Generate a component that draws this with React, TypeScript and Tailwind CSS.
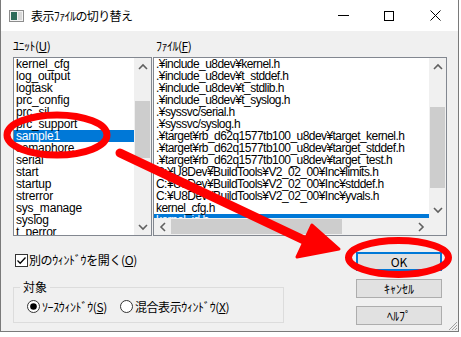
import React from "react";

const units = [
  "kernel_cfg",
  "log_output",
  "logtask",
  "prc_config",
  "prc_sil",
  "prc_support",
  "sample1",
  "semaphore",
  "serial",
  "start",
  "startup",
  "strerror",
  "sys_manage",
  "syslog",
  "t_perror",
];

const files = [
  ".¥include_u8dev¥kernel.h",
  ".¥include_u8dev¥t_stddef.h",
  ".¥include_u8dev¥t_stdlib.h",
  ".¥include_u8dev¥t_syslog.h",
  ".¥syssvc/serial.h",
  ".¥syssvc/syslog.h",
  ".¥target¥rb_d62q1577tb100_u8dev¥target_kernel.h",
  ".¥target¥rb_d62q1577tb100_u8dev¥target_stddef.h",
  ".¥target¥rb_d62q1577tb100_u8dev¥target_test.h",
  "C:¥U8Dev¥BuildTools¥V2_02_00¥Inc¥limits.h",
  "C:¥U8Dev¥BuildTools¥V2_02_00¥Inc¥stddef.h",
  "C:¥U8Dev¥BuildTools¥V2_02_00¥Inc¥yvals.h",
  "kernel_cfg.h",
  "kernel_id.h",
];

const ui = "font-['Noto_Sans_CJK_JP',sans-serif]";
const mono = "font-['Liberation_Sans','Noto_Sans_CJK_JP',sans-serif]";

function Chevron({ dir }: { dir: "up" | "down" | "left" | "right" }) {
  const d = {
    up: "M1 6 L5 2 L9 6",
    down: "M1 2 L5 6 L9 2",
    left: "M6 1 L2 5 L6 9",
    right: "M2 1 L6 5 L2 9",
  }[dir];
  const vert = dir === "up" || dir === "down";
  return (
    <svg width={vert ? 10 : 8} height={vert ? 8 : 10} viewBox={vert ? "0 0 10 8" : "0 0 8 10"}>
      <path d={d} fill="none" stroke="#606060" strokeWidth="1.6" />
    </svg>
  );
}

function VScroll({ thumbTop, thumbH }: { thumbTop: number; thumbH: number }) {
  return (
    <div className="w-[17px] h-full bg-[#f0f0f0] flex flex-col">
      <div className="h-[17px] flex items-center justify-center">
        <Chevron dir="up" />
      </div>
      <div className="flex-1 relative">
        <div
          className="absolute left-[1px] right-[1px] bg-[#cdcdcd]"
          style={{ top: thumbTop, height: thumbH }}
        />
      </div>
      <div className="h-[17px] flex items-center justify-center">
        <Chevron dir="down" />
      </div>
    </div>
  );
}

function Mn({ c }: { c: string }) {
  return <span className="underline underline-offset-[1px]">{c}</span>;
}

function Button({ children, focused }: { children: React.ReactNode; focused?: boolean }) {
  return (
    <div
      className={`w-[86px] h-[19px] flex items-center justify-center bg-[#e1e1e1] text-[12px] text-black ${
        focused ? "border-2 border-[#0078d7]" : "border border-[#adadad]"
      }`}
    >
      {children}
    </div>
  );
}

export default function App() {
  return (
    <div className={`w-[461px] h-[337px] bg-white overflow-hidden relative ${ui}`}>
      <div className="w-[459px] h-[332px] flex flex-col border-l border-r border-b border-[#7a7a7a] bg-[#f0f0f0]">
        {/* title bar */}
        <div className="h-[31px] bg-white flex items-center shrink-0">
          <div className="pl-[8px] pr-[7px] flex items-center">
            <svg width="15" height="12" viewBox="0 0 15 12">
              <rect x="0.5" y="0.5" width="14" height="11" fill="#f4f4f4" stroke="#8c8c8c" />
              <rect x="2" y="2" width="6" height="8" fill="#2e6b5a" />
              <rect x="9" y="2" width="4" height="8" fill="#d8d8d8" />
            </svg>
          </div>
          <span className="text-[12px] tracking-[-0.6px] text-black">表示ﾌｧｲﾙの切り替え</span>
          <div className="ml-auto flex h-full">
            <div className="w-[46px] flex items-center justify-center">
              <div className="w-[11px] h-[1px] bg-black" />
            </div>
            <div className="w-[46px] flex items-center justify-center">
              <div className="w-[10px] h-[10px] border border-black" />
            </div>
            <div className="w-[46px] flex items-center justify-center">
              <svg width="11" height="11" viewBox="0 0 11 11">
                <path d="M0.5 0.5 L10.5 10.5 M10.5 0.5 L0.5 10.5" stroke="#000" strokeWidth="1" />
              </svg>
            </div>
          </div>
        </div>

        {/* body */}
        <div className="flex-1 pl-[12px] pt-[8px]">
          <div className="grid grid-cols-[139px_294px] gap-x-[1px]">
            <div className="h-[18px] text-[12px] leading-[14px] tracking-[-0.5px] text-black">
              ﾕﾆｯﾄ(<Mn c="U" />)
            </div>
            <div className="h-[18px] text-[12px] leading-[14px] tracking-[-0.5px] text-black pl-[3px]">
              ﾌｧｲﾙ(<Mn c="F" />)
            </div>

            {/* unit list */}
            <div className="h-[179px] border border-[#828790] bg-white flex">
              <div className={`flex-1 overflow-hidden ${mono} text-[12px] tracking-[-0.2px]`}>
                {units.map((u) => (
                  <div
                    key={u}
                    className={`h-[12px] leading-[12px] pl-[2px] whitespace-nowrap ${
                      u === "sample1" ? "bg-[#0078d7] text-white" : "text-black"
                    }`}
                  >
                    {u}
                  </div>
                ))}
              </div>
              <VScroll thumbTop={26} thumbH={57} />
            </div>

            {/* file list */}
            <div className="h-[179px] border border-[#828790] bg-white grid grid-cols-[1fr_17px] grid-rows-[1fr_17px]">
              <div className={`overflow-hidden ${mono} text-[12px] tracking-[-0.55px]`}>
                {files.map((f, i) => (
                  <div
                    key={f}
                    className={`h-[12px] leading-[12px] pl-[2px] whitespace-nowrap ${
                      i === files.length - 1 ? "bg-[#0078d7] text-white" : "text-black"
                    }`}
                  >
                    {f}
                  </div>
                ))}
              </div>
              <VScroll thumbTop={32} thumbH={81} />
              <div className="bg-[#f0f0f0] flex items-center">
                <div className="w-[17px] flex items-center justify-center">
                  <Chevron dir="left" />
                </div>
                <div className="w-[171px] h-[15px] bg-[#cdcdcd]" />
                <div className="flex-1" />
                <div className="w-[17px] flex items-center justify-center">
                  <Chevron dir="right" />
                </div>
              </div>
              <div className="bg-[#f0f0f0]" />
            </div>
          </div>

          {/* bottom area */}
          <div className="flex mt-[16px]">
            <div className="w-[271px]">
              <div className="flex items-center h-[14px] ml-[2px] mt-[1px]">
                <div className="w-[13px] h-[13px] border border-[#333] bg-white flex items-center justify-center">
                  <svg width="11" height="11" viewBox="0 0 11 11">
                    <path d="M1.5 5.5 L4.2 8.2 L9.5 2.5" fill="none" stroke="#000" strokeWidth="1.3" />
                  </svg>
                </div>
                <span className="ml-[1px] text-[12px] leading-[14px] tracking-[-0.4px] text-black">
                  別のｳｨﾝﾄﾞｳを開く(<Mn c="O" />)
                </span>
              </div>

              <div className="mt-[20px] h-[36px] border border-[#dcdcdc] relative">
                <span className="absolute -top-[9px] left-[6px] px-[3px] bg-[#f0f0f0] text-[12px] leading-[16px] text-black">
                  対象
                </span>
                <div className="flex items-center h-full pt-[3px] pl-[13px] text-[12px] tracking-[-0.4px] text-black">
                  <div className="flex items-center">
                    <svg width="13" height="13" viewBox="0 0 13 13">
                      <circle cx="6.5" cy="6.5" r="6" fill="#fff" stroke="#333" />
                      <circle cx="6.5" cy="6.5" r="3.3" fill="#000" />
                    </svg>
                    <span className="ml-[2px]">
                      ｿｰｽｳｨﾝﾄﾞｳ(<Mn c="S" />)
                    </span>
                  </div>
                  <div className="flex items-center ml-[13px]">
                    <svg width="13" height="13" viewBox="0 0 13 13">
                      <circle cx="6.5" cy="6.5" r="6" fill="#fff" stroke="#333" />
                    </svg>
                    <span className="ml-[2px]">
                      混合表示ｳｨﾝﾄﾞｳ(<Mn c="X" />)
                    </span>
                  </div>
                </div>
              </div>
            </div>

            <div className="ml-[72px] flex flex-col gap-[8px]">
              <Button focused>OK</Button>
              <Button>ｷｬﾝｾﾙ</Button>
              <Button>ﾍﾙﾌﾟ</Button>
            </div>
          </div>
        </div>
      </div>

      {/* resize grip */}
      <svg className="absolute left-[447px] top-[320px]" width="11" height="11" viewBox="0 0 11 11">
        <path d="M10 2 L2 10 M10 5 L5 10 M10 8 L8 10" stroke="#a0a0a0" strokeWidth="1" />
      </svg>

      {/* red annotations */}
      <svg className="absolute inset-0 pointer-events-none" width="461" height="337" viewBox="0 0 461 337">
        <ellipse cx="57" cy="135" rx="50" ry="20" fill="none" stroke="#ff0000" strokeWidth="7" />
        <line x1="120" y1="153" x2="306" y2="241" stroke="#ff0000" strokeWidth="9" strokeLinecap="round" />
        <polygon points="312,225 339,249 297,257" fill="#ff0000" stroke="#ff0000" strokeWidth="3" strokeLinejoin="round" />
        <ellipse cx="398.5" cy="257.5" rx="50" ry="17" fill="none" stroke="#ff0000" strokeWidth="7" />
      </svg>
    </div>
  );
}
